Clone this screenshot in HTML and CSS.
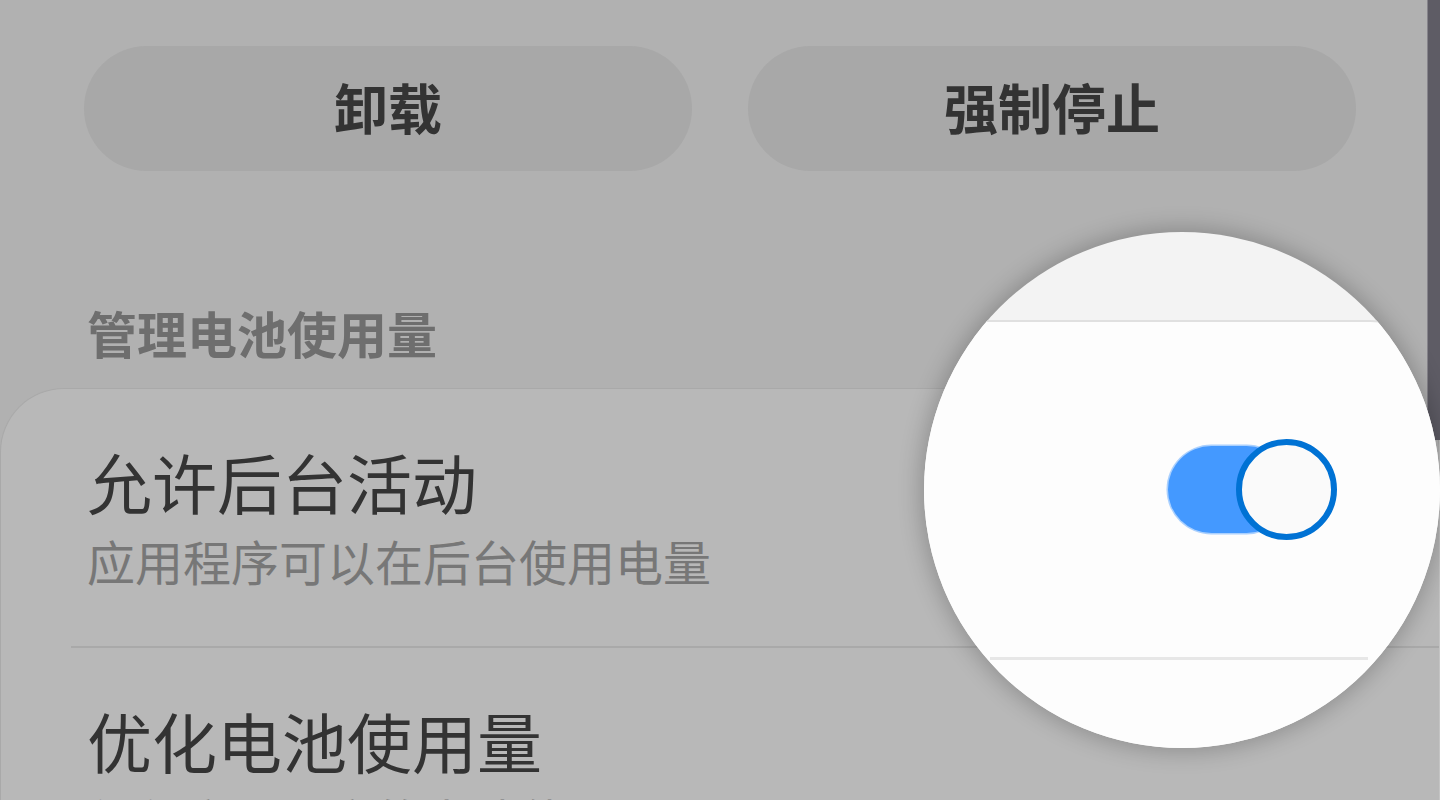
FILE: index.html
```html
<!DOCTYPE html>
<html lang="zh-CN">
<head>
    <meta charset="UTF-8">
    <meta name="viewport" content="width=device-width, initial-scale=1.0">
    <title>应用信息 - 电池</title>
    <link rel="stylesheet" href="styles.css">
</head>
<body>

    <!-- App info screen -->
    <div class="screen">
        <div class="actions">
            <button class="action-btn">卸载</button>
            <button class="action-btn">强制停止</button>
        </div>

        <h2 class="section-title">管理电池使用量</h2>

        <div class="card">
            <div class="row">
                <div class="row-title">允许后台活动</div>
                <div class="row-sub">应用程序可以在后台使用电量</div>
            </div>
            <div class="divider"></div>
            <div class="row">
                <div class="row-title">优化电池使用量</div>
                <div class="row-sub">优化应用程序的电池使用量</div>
            </div>
        </div>
    </div>

    <!-- Scrollbar -->
    <div class="scrollbar"></div>
    <div class="scroll-track"></div>

    <!-- Magnified switch -->
    <div class="magnifier">
        <div class="mag-top"></div>
        <div class="mag-card">
            <div class="mag-row">
                <div class="switch">
                    <span class="switch-track"></span>
                    <span class="switch-thumb"></span>
                </div>
            </div>
            <div class="mag-divider"></div>
        </div>
    </div>

</body>
</html>
```

FILE: styles.css
```css
body {
    font-family: "Noto Sans CJK SC", "Noto Sans", sans-serif;
    margin: 0;
    padding: 0;
    background: #b1b1b1;
    color: #333;
    width: 1440px;
    height: 800px;
    overflow: hidden;
    position: relative;
}

.screen {
    display: flex;
    flex-direction: column;
}

/* Top buttons */
.actions {
    display: flex;
    gap: 56px;
    padding: 46px 84px 0 84px;
}

.action-btn {
    flex: 1;
    height: 125px;
    border: none;
    border-radius: 63px;
    background: #a8a8a8;
    color: #333;
    font-family: inherit;
    font-size: 54px;
    font-weight: 700;
    line-height: 1;
    padding: 0 0 4px 0;
}

.section-title {
    margin: 136px 0 0 87px;
    font-size: 50px;
    font-weight: 700;
    line-height: 50px;
    color: #6e6e6e;
}

/* List card */
.card {
    margin-top: 31px;
    background: #b8b8b8;
    border: 1px solid #a9a9a9;
    border-bottom: none;
    border-radius: 64px 64px 0 0;
}

.row {
    display: flex;
    flex-direction: column;
    gap: 22px;
    padding: 60px 0 62px 86px;
}

.row-title {
    font-size: 65px;
    line-height: 65px;
    color: #333;
}

.row-sub {
    font-size: 48px;
    line-height: 48px;
    color: #777;
}

.divider {
    height: 2px;
    background: #a9a9a9;
    margin-left: 70px;
}

/* Scrollbar */
.scrollbar {
    position: absolute;
    top: 0;
    right: 0;
    width: 12px;
    height: 440px;
    background: #5e5c65;
    border-left: 1px solid #86848b;
}

.scroll-track {
    position: absolute;
    top: 440px;
    right: 0;
    width: 1px;
    bottom: 0;
    background: #c4c4c4;
}

/* Magnifier bubble */
.magnifier {
    position: absolute;
    left: 924px;
    top: 232px;
    width: 516px;
    height: 516px;
    border-radius: 50%;
    overflow: hidden;
    background: #f3f3f3;
    box-shadow: 0 0 22px 4px rgba(0, 0, 0, 0.22);
    display: flex;
    flex-direction: column;
}

.mag-top {
    height: 88px;
    flex-shrink: 0;
}

.mag-card {
    flex: 1;
    margin-right: -30px;
    background: #fdfdfd;
    border-top: 2px solid #e0e0e0;
    border-top-right-radius: 100px;
}

.mag-row {
    height: 335px;
    display: flex;
    align-items: center;
    justify-content: flex-end;
    padding-right: 133px;
}

.switch {
    display: flex;
    align-items: center;
}

.switch-track {
    width: 122px;
    height: 87px;
    border-radius: 44px;
    background: #4499ff;
    box-shadow: 0 0 0 1.5px rgba(68, 153, 255, 0.45);
}

.switch-thumb {
    width: 89px;
    height: 89px;
    margin-left: -54px;
    border-radius: 50%;
    border: 6px solid #0072d4;
    background: #fafafa;
}

.mag-divider {
    height: 3px;
    background: #e7e7e7;
    margin: 0 102px 0 66px;
}
```
